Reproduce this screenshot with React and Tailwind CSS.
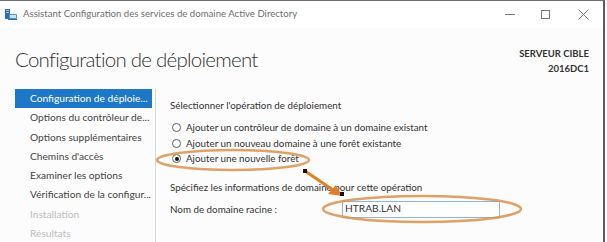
import React from 'react';

const font = { fontFamily: 'Lato, "Open Sans", sans-serif' };

const steps = [
  { label: 'Configuration de déploie...', active: true },
  { label: 'Options du contrôleur de...' },
  { label: 'Options supplémentaires' },
  { label: "Chemins d'accès" },
  { label: 'Examiner les options' },
  { label: 'Vérification de la configur...' },
  { label: 'Installation', disabled: true },
  { label: 'Résultats', disabled: true },
];

const options = [
  { label: 'Ajouter un contrôleur de domaine à un domaine existant' },
  { label: 'Ajouter un nouveau domaine à une forêt existante' },
  { label: 'Ajouter une nouvelle forêt', checked: true },
];

const AppIcon = () => (
  <svg width="12" height="11" viewBox="0 0 12 11">
    <rect x="0" y="0" width="5" height="10" fill="#2a6fb3" />
    <rect x="1" y="1" width="3" height="1" fill="#9cc4ea" />
    <rect x="1" y="3" width="3" height="1" fill="#9cc4ea" />
    <rect x="4" y="5" width="8" height="5" rx="1" fill="#4a8fd4" />
    <rect x="5" y="6" width="6" height="3" fill="#cfe3f6" />
    <rect x="3" y="10" width="9" height="1" fill="#2a6fb3" />
  </svg>
);

const Radio = ({ checked }) => (
  <span className="w-[9px] h-[9px] rounded-full border border-[#5f5f5f] bg-white flex items-center justify-center shrink-0">
    {checked && <span className="w-[4px] h-[4px] rounded-full bg-[#111]" />}
  </span>
);

export default function App() {
  return (
    <div className="relative w-[607px] h-[242px] overflow-hidden bg-white" style={font}>
      <div className="w-[605px] h-[242px] border-t border-[#6f6f6f] border-r-2 border-r-[#5c5c5c] bg-[#fcfcfc] flex flex-col">
        {/* Title bar */}
        <div className="h-[27px] bg-white flex items-center pl-[5px] shrink-0">
          <AppIcon />
          <span className="ml-[6px] text-[9.6px] text-[#6f6f6f] -mt-px">
            Assistant Configuration des services de domaine Active Directory
          </span>
          <div className="ml-auto flex items-center text-[#777]">
            <span className="w-[10px] h-px bg-[#777] mr-[26px]" />
            <span className="w-[9px] h-[9px] border border-[#777] mr-[28px]" />
            <svg width="11" height="11" viewBox="0 0 11 11" className="mr-[14px]">
              <path d="M0.5 0.5 L10.5 10.5 M10.5 0.5 L0.5 10.5" stroke="#777" strokeWidth="1" />
            </svg>
          </div>
        </div>

        {/* Header */}
        <div className="flex justify-between pl-[15px] pr-[14px] pt-[16px] h-[61px] shrink-0">
          <h1 className="text-[20.5px] font-light text-[#333] leading-[30px] tracking-[-0.75px]">
            Configuration de déploiement
          </h1>
          <div className="text-right text-[9.5px] font-bold text-[#333] leading-[15px] pt-[2px]">
            <div>SERVEUR CIBLE</div>
            <div>2016DC1</div>
          </div>
        </div>

        {/* Body */}
        <div className="flex flex-1">
          <div className="w-[156px] pl-[15px] border-r border-[#d9d9d9] shrink-0">
            <ul className="w-[137px]">
              {steps.map((s) => (
                <li
                  key={s.label}
                  className={`h-[19.3px] flex items-center pl-[15px] text-[10.2px] whitespace-nowrap ${
                    s.active ? 'bg-[#1d78c8] text-white' : s.disabled ? 'text-[#bdbdbd]' : 'text-[#444]'
                  }`}
                >
                  {s.label}
                </li>
              ))}
            </ul>
          </div>

          <div className="flex-1 pl-[14px] pt-[9px] text-[9.8px] text-[#333]">
            <p className="leading-[15px]">Sélectionner l'opération de déploiement</p>
            <div className="mt-[7px] flex flex-col">
              {options.map((o) => (
                <label key={o.label} className="h-[15.5px] flex items-center pl-[2px]">
                  <Radio checked={o.checked} />
                  <span className="ml-[5px]">{o.label}</span>
                </label>
              ))}
            </div>
            <p className="mt-[13px] leading-[15px]">Spécifiez les informations de domaine pour cette opération</p>
            <div className="mt-[6px] flex items-center">
              <span className="w-[172px]">Nom de domaine racine :</span>
              <div className="w-[158px] h-[17px] border border-[#8fb3d9] bg-white flex items-center pl-[2px] text-[10.2px]">
                HTRAB.LAN
              </div>
            </div>
          </div>
        </div>
      </div>

      {/* Annotations */}
      <svg className="absolute inset-0 pointer-events-none" width="607" height="242">
        <ellipse cx="233" cy="160" rx="76" ry="10" fill="none" stroke="#d9904a" strokeWidth="2.5" opacity="0.85" />
        <ellipse cx="422" cy="209" rx="99" ry="13" fill="none" stroke="#d9904a" strokeWidth="2.5" opacity="0.85" />
        <path d="M305 171 L333 190" stroke="#e07f26" strokeWidth="3" />
        <path d="M342 196 L328 194 L336 185 Z" fill="#e07f26" />
        <rect x="303" y="169" width="4" height="4" fill="#111" />
        <rect x="340" y="192" width="4" height="4" fill="#111" />
      </svg>
    </div>
  );
}
